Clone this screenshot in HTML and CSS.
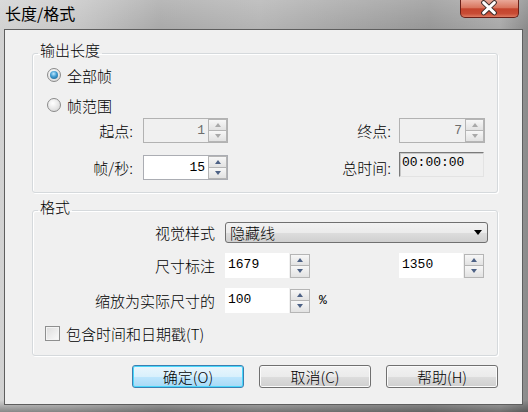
FILE: index.html
```html
<!DOCTYPE html>
<html lang="zh-CN">
<head>
  <meta charset="UTF-8">
  <title>长度/格式</title>
  <link rel="stylesheet" href="styles.css">
</head>
<body>
  <div class="window">
    <div class="titlebar">
      <span class="title">长度/格式</span>
      <span class="close">
        <svg width="59" height="18" viewBox="0 0 59 18">
          <path d="M24 3.5 L35 14 M35 3.5 L24 14" stroke="#3b2a28" stroke-width="5" stroke-linecap="round" fill="none"/>
          <path d="M24 3.5 L35 14 M35 3.5 L24 14" stroke="#ffffff" stroke-width="3" stroke-linecap="round" fill="none"/>
        </svg>
      </span>
    </div>

    <div class="client">
      <!-- output length -->
      <fieldset class="group group-length">
        <legend>输出长度</legend>
        <label class="radio-row first"><span class="radio checked"></span>全部帧</label>
        <label class="radio-row"><span class="radio"></span>帧范围</label>
        <div class="field-row first">
          <span class="lbl lbl-left">起点:</span>
          <div class="spin disabled">
            <span class="spin-value">1</span>
            <span class="spin-btns"><i class="up"></i><i class="down"></i></span>
          </div>
          <span class="lbl lbl-right">终点:</span>
          <div class="spin disabled wide">
            <span class="spin-value">7</span>
            <span class="spin-btns"><i class="up"></i><i class="down"></i></span>
          </div>
        </div>
        <div class="field-row">
          <span class="lbl lbl-left">帧/秒:</span>
          <div class="spin">
            <span class="spin-value">15</span>
            <span class="spin-btns"><i class="up"></i><i class="down"></i></span>
          </div>
          <span class="lbl lbl-right">总时间:</span>
          <div class="readout">00:00:00</div>
        </div>
      </fieldset>

      <!-- format -->
      <fieldset class="group group-format">
        <legend>格式</legend>
        <div class="fmt-row select-row">
          <span class="fmt-lbl">视觉样式</span>
          <div class="select">
            <span>隐藏线</span>
            <i class="caret"></i>
          </div>
        </div>
        <div class="fmt-row">
          <span class="fmt-lbl">尺寸标注</span>
          <span class="num">1679</span>
          <span class="spinner"><i class="up"></i><i class="down"></i></span>
          <span class="num second">1350</span>
          <span class="spinner"><i class="up"></i><i class="down"></i></span>
        </div>
        <div class="fmt-row">
          <span class="fmt-lbl">缩放为实际尺寸的</span>
          <span class="num">100</span>
          <span class="spinner"><i class="up"></i><i class="down"></i></span>
          <span class="pct">%</span>
        </div>
        <label class="check-row"><span class="checkbox"></span>包含时间和日期戳(T)</label>
      </fieldset>

      <div class="buttons">
        <button class="default">确定(O)</button>
        <button>取消(C)</button>
        <button>帮助(H)</button>
      </div>
    </div>
  </div>
</body>
</html>
```

FILE: styles.css
```css
body {
  margin: 0;
  font-family: "Noto Sans CJK SC", "DejaVu Sans", sans-serif;
  font-size: 15px;
  font-weight: 300;
  color: #000;
}
.window {
  width: 528px;
  height: 412px;
  display: flex;
  flex-direction: column;
  background:
    linear-gradient(180deg, rgba(255,255,255,0.18) 0, rgba(255,255,255,0) 29px, rgba(0,0,0,0) 400px, rgba(0,0,0,0.35) 412px),
    linear-gradient(90deg, #d2d2d2 0, #c8c8c8 70px, #a9a9a9 160px, #b4b4b4 260px, #a6a6a6 340px, #979797 430px, #a9a9a9 500px, #8a8a8a 528px);
}
.titlebar {
  height: 29px;
  flex: none;
  display: flex;
  justify-content: space-between;
  align-items: flex-start;
  padding: 0 9px 0 5px;
  box-sizing: border-box;
}
.title {
  margin-top: 5px;
  line-height: 16px;
  font-size: 16px;
  font-weight: 400;
}
.close {
  width: 59px;
  height: 18px;
  box-sizing: border-box;
  border: 1px solid #6a2018;
  border-top: none;
  border-radius: 0 0 5px 5px;
  background: linear-gradient(180deg, #e9a898 0%, #d9765f 45%, #c4442d 52%, #c84c35 80%, #dd7b62 100%);
  display: flex;
}
.close svg {
  margin: -1px 0 0 -1px;
}
.client {
  margin: 0 5px 0 4px;
  height: 376px;
  box-sizing: border-box;
  border: 1px solid #5e5e5e;
  background: #f0f0f0;
  padding: 12px 0 0 27px;
}

/* group boxes */
.group {
  margin: 0;
  padding: 0 0 12px 0;
  width: 466px;
  min-width: 0;
  box-sizing: border-box;
  border: 1px solid #d5d9dc;
  border-radius: 3px;
  box-shadow: inset 1px 1px 0 #fff, 1px 1px 0 #fff;
}
.group legend {
  margin-left: 5px;
  padding: 0 2px 6px;
  line-height: 16px;
}
.group-format {
  margin-top: 6px;
  padding-bottom: 13px;
}

/* radios */
.radio-row {
  display: flex;
  align-items: center;
  height: 20px;
  margin-top: 10px;
  padding-left: 14px;
  gap: 6px;
}
.radio-row.first {
  margin-top: 1px;
}
.radio {
  width: 12px;
  height: 12px;
  border-radius: 50%;
  border: 1px solid #8a8a8a;
  background: radial-gradient(circle at 40% 35%, #fff 0, #e6e6e6 55%, #cfcfcf 100%);
  display: flex;
  align-items: center;
  justify-content: center;
}
.radio.checked::before {
  content: "";
  width: 8px;
  height: 8px;
  border-radius: 50%;
  background: radial-gradient(circle at 45% 35%, #bfe8ff 0, #3e9ad0 45%, #1b5a86 100%);
}

/* length rows */
.field-row {
  display: flex;
  align-items: center;
  height: 25px;
  margin-top: 12px;
}
.field-row.first {
  margin-top: 3px;
}
.lbl {
  text-align: right;
}
.lbl-left {
  width: 100px;
  margin-right: 10px;
}
.lbl-right {
  width: 163px;
  margin-right: 8px;
}
.spin {
  width: 85px;
  height: 25px;
  box-sizing: border-box;
  border: 1px solid #abadb3;
  background: #fff;
  display: flex;
  align-items: center;
}
.spin.wide {
  width: 86px;
}
.spin.disabled {
  background: #f0f0f0;
  border-color: #b2b2b2;
  color: #6d6d6d;
}
.spin-value {
  flex: 1;
  text-align: right;
  padding-right: 3px;
  font-family: "Liberation Mono", monospace;
  font-size: 13px;
  font-weight: 400;
}
.spin-btns {
  width: 19px;
  height: 23px;
  display: flex;
  flex-direction: column;
}
.spin-btns i,
.spinner i {
  flex: 1;
  display: flex;
  align-items: center;
  justify-content: center;
  border: 1px solid #b5b5b5;
  background: linear-gradient(180deg, #f7f7f7, #e2e2e2);
}
.spin-btns i + i,
.spinner i + i {
  border-top: none;
}
.up::before,
.down::before {
  content: "";
  width: 0;
  height: 0;
  border-left: 3.5px solid transparent;
  border-right: 3.5px solid transparent;
}
.up::before {
  border-bottom: 4px solid #4d6185;
}
.down::before {
  border-top: 4px solid #4d6185;
}
.disabled .up::before {
  border-bottom-color: #a9a9a9;
}
.disabled .down::before {
  border-top-color: #a9a9a9;
}
.readout {
  width: 85px;
  height: 25px;
  box-sizing: border-box;
  align-self: flex-start;
  margin-top: -3px;
  border: 1px solid #e3e3e3;
  border-top-color: #7a7a7a;
  border-left-color: #7a7a7a;
  box-shadow: inset 1px 1px 0 #c8c8c8;
  background: #f0f0f0;
  padding: 2px 0 0 2px;
  font-family: "Liberation Mono", monospace;
  font-size: 13px;
  font-weight: 400;
  line-height: 16px;
}

/* format rows */
.fmt-row {
  display: flex;
  align-items: center;
  height: 25px;
  margin-top: 10px;
}
.fmt-row.select-row {
  height: 21px;
  margin-top: 1px;
}
.fmt-lbl {
  width: 182px;
  margin-right: 10px;
  text-align: right;
}
.select {
  width: 263px;
  height: 21px;
  box-sizing: border-box;
  border: 1px solid #707070;
  border-radius: 3px;
  background: linear-gradient(180deg, #f2f2f2 0, #ebebeb 50%, #dddddd 51%, #cfcfcf 100%);
  display: flex;
  align-items: center;
  justify-content: space-between;
  padding: 0 5px 0 4px;
}
.caret {
  width: 0;
  height: 0;
  border-left: 4px solid transparent;
  border-right: 4px solid transparent;
  border-top: 5px solid #000;
}
.num {
  width: 64px;
  height: 25px;
  box-sizing: border-box;
  background: #fff;
  padding: 3px 0 0 3px;
  font-family: "Liberation Mono", monospace;
  font-size: 13px;
  font-weight: 400;
  line-height: 17px;
}
.num.second {
  margin-left: 89px;
}
.spinner {
  width: 20px;
  height: 24px;
  margin-left: 1px;
  display: flex;
  flex-direction: column;
}
.pct {
  margin-left: 9px;
  font-family: "Liberation Mono", monospace;
  font-size: 13px;
  font-weight: 400;
}
.check-row {
  display: flex;
  align-items: center;
  height: 17px;
  margin-top: 12px;
  padding-left: 12px;
  gap: 6px;
}
.checkbox {
  width: 13px;
  height: 13px;
  border: 1px solid #8e8f8f;
  background: linear-gradient(135deg, #dcdcdc, #fbfbfb);
  box-shadow: inset 0 0 0 1px #f4f4f4;
}

/* dialog buttons */
.buttons {
  display: flex;
  gap: 15px;
  margin: 9px 0 0 100px;
}
button {
  width: 112px;
  height: 23px;
  padding: 0;
  font-family: inherit;
  font-size: 15px;
  font-weight: 300;
  line-height: 20px;
  color: #000;
  border: 1px solid #707070;
  border-radius: 3px;
  background: linear-gradient(180deg, #f2f2f2 0, #ebebeb 50%, #dddddd 51%, #cfcfcf 100%);
  box-shadow: inset 0 0 0 1px #fbfbfb;
}
button.default {
  border-color: #3c7fb1;
  background: linear-gradient(180deg, #eaf6fd 0, #d9f0fc 50%, #bee6fd 51%, #a7d9f5 100%);
  box-shadow: inset 0 0 0 1px #48d7fb;
}
```
